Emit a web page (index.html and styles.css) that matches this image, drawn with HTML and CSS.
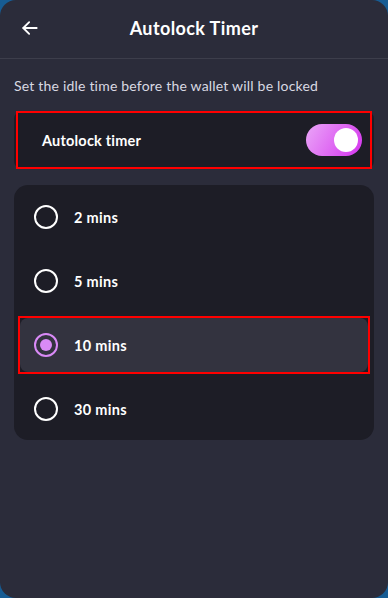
FILE: index.html
```html
<!DOCTYPE html>
<html lang="en">
<head>
    <meta charset="UTF-8">
    <meta name="viewport" content="width=device-width, initial-scale=1.0">
    <title>Autolock Timer</title>
    <link rel="stylesheet" href="styles.css">
</head>
<body>
    <div class="panel">
        <div class="header">
            <button class="back">
                <svg width="20" height="20" viewBox="0 0 24 24" fill="none" stroke="#fff" stroke-width="2.2" stroke-linecap="round" stroke-linejoin="round">
                    <path d="M20 12H4"/>
                    <path d="M11 5l-7 7 7 7"/>
                </svg>
            </button>
            <h1>Autolock Timer</h1>
        </div>

        <p class="hint">Set the idle time before the wallet will be locked</p>

        <div class="lock-card">
            <div class="lock-row">
                <span>Autolock timer</span>
                <div class="toggle on"><div class="knob"></div></div>
            </div>
        </div>

        <div class="options">
            <div class="option"><span class="radio"></span><span>2 mins</span></div>
            <div class="option"><span class="radio"></span><span>5 mins</span></div>
            <div class="option activo"><span class="radio"></span><span>10 mins</span></div>
            <div class="option"><span class="radio"></span><span>30 mins</span></div>
        </div>
    </div>
</body>
</html>
```
FILE: styles.css
```css
body {
    margin: 0;
    background: #175c93;
    font-family: Lato, "Noto Sans", sans-serif;
    color: #fff;
}
.panel {
    width: 388px;
    height: 598px;
    background: #2b2c3a;
    border-radius: 16px;
    overflow: hidden;
}
.header {
    position: relative;
    height: 58px;
    border-bottom: 1px solid #3d3e4b;
    display: flex;
    align-items: center;
    justify-content: center;
}
.header h1 {
    margin: -2px 0 0;
    font-size: 18px;
    font-weight: 700;
    letter-spacing: 0.4px;
}
.back {
    position: absolute;
    left: 20px;
    top: 18px;
    background: none;
    border: none;
    padding: 0;
    width: 20px;
    height: 20px;
}
.hint {
    margin: 18px 14px 16px;
    font-size: 14px;
    letter-spacing: 0.2px;
    color: #d9d9e2;
    line-height: 18px;
}
.lock-card {
    margin: 0 14px;
    background: #1d1d26;
    border-radius: 8px;
}
.lock-row {
    margin: 0 2px;
    height: 58px;
    box-sizing: border-box;
    border: 2px solid #ff0000;
    display: flex;
    align-items: center;
    justify-content: space-between;
    padding: 0 8px 0 24px;
    font-size: 14.5px;
    letter-spacing: 0.2px;
    font-weight: 700;
}
.toggle {
    width: 56px;
    height: 32px;
    border-radius: 16px;
    background: #555;
    display: flex;
    align-items: center;
    padding: 0 4px;
    box-sizing: border-box;
}
.toggle.on {
    background: linear-gradient(120deg, #eaa6f8, #d534ee);
    justify-content: flex-end;
}
.knob {
    width: 24px;
    height: 24px;
    border-radius: 50%;
    background: #fff;
}
.options {
    margin: 16px 14px 0;
    background: #1d1d26;
    border-radius: 14px;
    padding: 5px 6px;
    height: 255px;
    box-sizing: border-box;
    display: flex;
    flex-direction: column;
    gap: 10px;
}
.option {
    position: relative;
    height: 54px;
    flex-shrink: 0;
    border-radius: 8px;
    display: flex;
    align-items: center;
    gap: 16px;
    padding-left: 14px;
    font-size: 14.5px;
    letter-spacing: 0.3px;
    font-weight: 700;
}
.option.activo {
    background: #33333f;
}
.option.activo::before {
    content: "";
    position: absolute;
    top: -2px;
    left: -2px;
    right: -2px;
    bottom: -2px;
    border: 2px solid #ff0000;
}
.radio {
    width: 24px;
    height: 24px;
    box-sizing: border-box;
    border: 2px solid #fff;
    border-radius: 50%;
    display: flex;
    align-items: center;
    justify-content: center;
}
.option.activo .radio {
    border-color: #d98af6;
}
.option.activo .radio::after {
    content: "";
    width: 12px;
    height: 12px;
    border-radius: 50%;
    background: #d98af6;
}
```
